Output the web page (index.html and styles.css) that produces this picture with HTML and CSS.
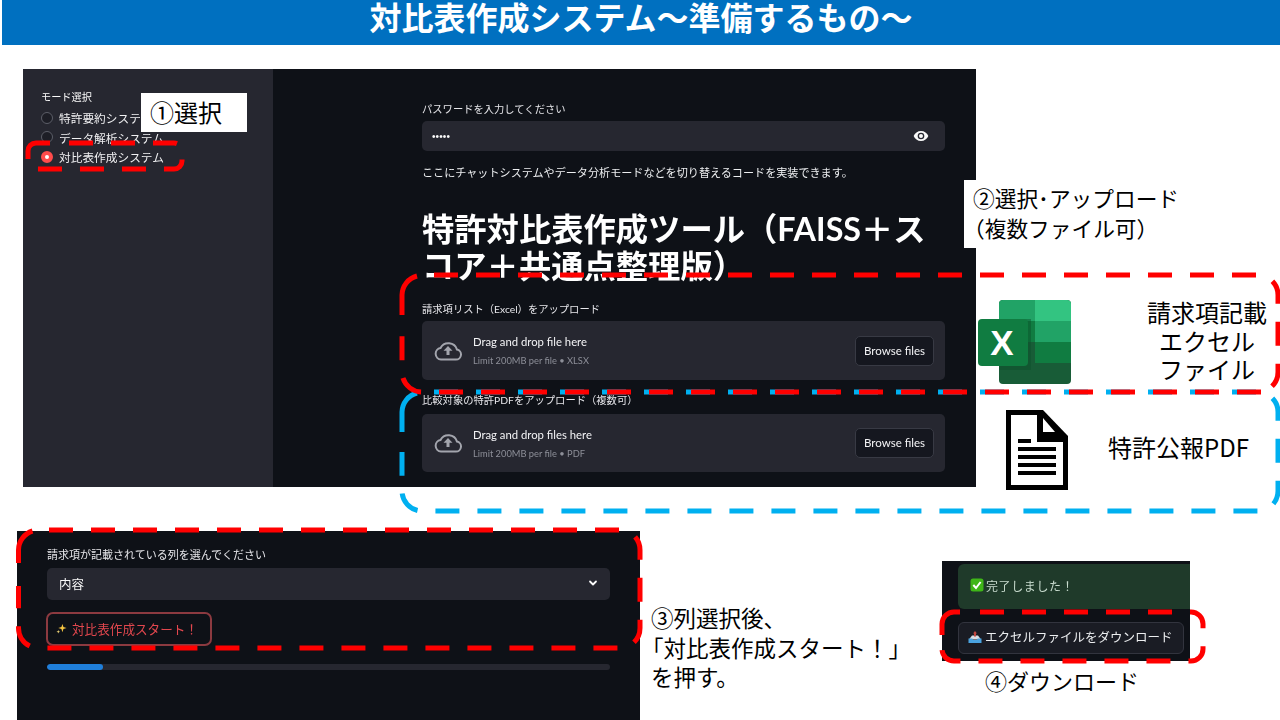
FILE: index.html
```html
<!DOCTYPE html>
<html lang="ja">
<head>
<meta charset="utf-8">
<title>対比表作成システム～準備するもの～</title>
<link rel="stylesheet" href="styles.css">
</head>
<body>
<div class="slide">
  <header class="title-bar">対比表作成システム～準備するもの～</header>

  <section class="window window-main">
    <aside class="sidebar">
      <div class="side-label">モード選択</div>
      <div class="radio-list">
        <div class="radio-row"><span class="radio"></span>特許要約システム</div>
        <div class="radio-row"><span class="radio"></span>データ解析システム</div>
        <div class="radio-row"><span class="radio radio-on"></span>対比表作成システム</div>
      </div>
    </aside>
    <main class="content">
      <div class="label">パスワードを入力してください</div>
      <div class="input">
        <span class="dots">•••••</span>
        <svg class="eye" viewBox="0 0 24 24" width="16" height="16"><path fill="#fafafa" d="M12 4.500C7 4.500 2.700 7.600 1 12c1.700 4.400 6 7.500 11 7.500s9.300-3.100 11-7.500c-1.700-4.400-6-7.500-11-7.500zM12 17a5 5 0 1 1 0-10 5 5 0 0 1 0 10zm0-8a3 3 0 1 0 0 6 3 3 0 0 0 0-6z"/></svg>
      </div>
      <p class="note">ここにチャットシステムやデータ分析モードなどを切り替えるコードを実装できます。</p>
      <h1 class="heading">特許対比表作成ツール（FAISS＋スコア＋共通点整理版）</h1>
      <div class="label label-first">請求項リスト（Excel）をアップロード</div>
      <div class="dropzone">
        <svg class="cloud" viewBox="0 0 28 20" width="28" height="20"><path fill="none" stroke="#a3a5ad" stroke-width="2" d="M7 18.500h15a5 5 0 0 0 1-9.900A9 9 0 0 0 6.500 7 5.800 5.800 0 0 0 7 18.500z"/><path fill="#a3a5ad" d="M14 5l4.500 4.800h-3v4.200h-3V9.800h-3z"/></svg>
        <div class="drop-text">
          <div class="drop-title">Drag and drop file here</div>
          <div class="drop-limit">Limit 200MB per file • XLSX</div>
        </div>
        <div class="browse">Browse files</div>
      </div>
      <div class="label label-second">比較対象の特許PDFをアップロード（複数可）</div>
      <div class="dropzone dropzone-second">
        <svg class="cloud" viewBox="0 0 28 20" width="28" height="20"><path fill="none" stroke="#a3a5ad" stroke-width="2" d="M7 18.500h15a5 5 0 0 0 1-9.900A9 9 0 0 0 6.500 7 5.800 5.800 0 0 0 7 18.500z"/><path fill="#a3a5ad" d="M14 5l4.500 4.800h-3v4.200h-3V9.800h-3z"/></svg>
        <div class="drop-text">
          <div class="drop-title">Drag and drop files here</div>
          <div class="drop-limit">Limit 200MB per file • PDF</div>
        </div>
        <div class="browse">Browse files</div>
      </div>
    </main>
  </section>

  <section class="window window-select">
    <div class="label label-select">請求項が記載されている列を選んでください</div>
    <div class="select">
      <span>内容</span>
      <svg viewBox="0 0 12 12" width="12" height="12"><path fill="none" stroke="#fafafa" stroke-width="1.800" stroke-linecap="round" stroke-linejoin="round" d="M3 4.500l3 3 3-3"/></svg>
    </div>
    <div class="start-btn">
      <svg viewBox="0 0 12 12" width="11" height="11"><path fill="#f5c542" d="M7 1l1.100 3.400L11.500 5.500 8.100 6.600 7 10 5.900 6.600 2.500 5.500l3.400-1.100z"/><path fill="#f5d97a" d="M2.500 7.500l.5 1.500 1.500.5-1.500.5-.5 1.500-.5-1.500L.5 9.500 2 9z"/></svg>
      対比表作成スタート！
    </div>
    <div class="progress"><div class="progress-fill"></div></div>
  </section>

  <section class="window window-done">
    <div class="success">
      <svg viewBox="0 0 14 14" width="14" height="14"><rect x=".5" y=".5" width="13" height="13" rx="2.500" fill="#3fb618"/><path fill="none" stroke="#fff" stroke-width="2" d="M3.300 7l2.700 3 4.600-6"/></svg>
      完了しました！
    </div>
    <div class="download">
      <svg viewBox="0 0 14 14" width="14" height="14"><path fill="#d9dde3" d="M4 5.500h6l3 4H1z"/><path fill="#c2473f" d="M7 1l2 2.500H8V6.500H6V3.500H5z"/><path fill="#4aa3e0" d="M.5 8.500h3.800l.9 1.500h3.600l.9-1.500h3.800V13H.5z"/></svg>
      エクセルファイルをダウンロード
    </div>
  </section>

  <div class="callout callout-one">①選択</div>
  <div class="callout callout-two">②選択･アップロード<br><span class="hang">（</span>複数ファイル可）</div>
  <div class="caption caption-three">③列選択後、<br><span class="hang">「</span>対比表作成スタート！」<br>を押す。</div>
  <div class="caption caption-four">④ダウンロード</div>
  <div class="caption caption-excel">請求項記載<br>エクセル<br>ファイル</div>
  <div class="caption caption-pdf">特許公報PDF</div>

  <svg class="icon-excel" viewBox="0 0 94 85" width="94" height="85">
    <rect x="21" y="1" width="72" height="84" rx="4" fill="#185c37"/>
    <path fill="#21a366" d="M25 1h32v21H21V5a4 4 0 0 1 4-4z"/>
    <path fill="#33c481" d="M57 1h32a4 4 0 0 1 4 4v17H57z"/>
    <rect x="21" y="22" width="36" height="21" fill="#107c41"/>
    <rect x="57" y="22" width="36" height="21" fill="#21a366"/>
    <rect x="57" y="43" width="36" height="21" fill="#107c41"/>
    <rect x="21" y="20" width="32" height="51" fill="#0b4f2a" opacity=".45"/>
    <rect x="0" y="20" width="50" height="47" rx="4" fill="#107c41"/>
    <text class="excel-x" x="24" y="56" text-anchor="middle">X</text>
  </svg>

  <svg class="icon-doc" viewBox="0 0 62 80" width="62" height="80">
    <path fill="#000" d="M0 0h37l25 26v54H0z"/>
    <path fill="#fff" d="M5 5h26v27h26v43H5z"/>
    <path fill="#fff" d="M37 8l12 14H37z"/>
    <path fill="#000" d="M12 29h13v4H12zM12 37h38v4H12zM12 45h38v4H12zM12 53h38v4H12zM12 61h38v4H12z"/>
  </svg>

  <svg class="overlay" viewBox="0 0 1280 720" width="1280" height="720">
    <g fill="none" stroke-width="5">
      <g stroke="#00b0f0">
        <path stroke-dasharray="24 18" d="M434 392H1258a20 20 0 0 1 20 20v79a20 20 0 0 1-20 20H422a20 20 0 0 1-20-20V452"/>
        <path d="M402 432V412a20 20 0 0 1 15-19"/>
      </g>
      <g stroke="#ff0000">
        <path stroke-dasharray="24 18" d="M434 275H1258a20 20 0 0 1 20 20v77a20 20 0 0 1-20 20"/>
        <path stroke-dasharray="24 18" d="M1261 392H422a20 20 0 0 1-20-20V336"/>
        <path d="M402 315V295a20 20 0 0 1 15-19"/>
        <path stroke-dasharray="24 18" d="M49 530H620a20 20 0 0 1 20 20v78a20 20 0 0 1-20 20H38.500a20 20 0 0 1-20-20V586"/>
        <path d="M18.500 563V550a20 20 0 0 1 14-19"/>
        <path stroke-dasharray="24 18" d="M980 612H1191a12 12 0 0 1 12 12v25a12 12 0 0 1-12 12H954a12 12 0 0 1-12-12"/>
        <path d="M942 635V624a12 12 0 0 1 12-12H960"/>
        <path stroke-dasharray="24 18" d="M69 143H174a8 8 0 0 1 8 8V161a8 8 0 0 1-8 8H36a8 8 0 0 1-8-8"/>
        <path d="M28 159V151a8 8 0 0 1 8-8H50"/>
      </g>
    </g>
  </svg>
</div>
</body>
</html>
```
FILE: styles.css
```css
* { box-sizing: border-box; }
html, body { margin: 0; padding: 0; background: #fff; }
body { font-family: "Noto Sans CJK JP", "Noto Sans", sans-serif; }
.slide { position: relative; width: 1280px; height: 720px; overflow: hidden; background: #fff; }
.title-bar {
  margin-left: 2px; height: 45px; background: #0070c0; color: #fff;
  font-size: 32px; font-weight: 700; line-height: 32px; text-align: center;
}
.window { position: absolute; background: #0e1117; color: #fafafa; filter: blur(.3px); font-family: Lato, "Noto Sans CJK JP", sans-serif; }
.window-main { left: 23px; top: 69px; width: 953px; height: 418px; display: flex; }
.window-select { left: 17px; top: 531px; width: 623px; height: 189px; padding: 16px 30px 0; }
.window-done { left: 942px; top: 561px; width: 248px; height: 100px; padding: 3px 0 0 16px; }

.sidebar { width: 250px; background: #262730; padding: 21px 0 0 18px; }
.side-label { font-size: 10.200px; line-height: 14px; }
.radio-list { margin-top: 4px; }
.radio-row { display: flex; align-items: center; gap: 6px; height: 19.500px; font-size: 11.700px; color: #f0f0f2; white-space: nowrap; }
.radio { width: 12px; height: 12px; border-radius: 50%; border: 1.500px solid #5c5e68; background: #1d1e26; flex: none; }
.radio-on { border: 4px solid #ff4b4b; background: #fff; }

.content { flex: 1; padding: 32px 31px 0 149px; }
.label { font-size: 10.300px; line-height: 16px; color: #e6e6ea; white-space: nowrap; }
.label-first { margin-top: 17px; }
.label-second { margin-top: 12px; }
.input { margin-top: 4px; height: 30px; background: #262730; border-radius: 5px; display: flex; align-items: center; justify-content: space-between; padding: 0 16px 0 10px; }
.dots { font-size: 10px; letter-spacing: .1px; font-family: "Liberation Sans", sans-serif; }
.note { margin: 14px 0 0; font-size: 11.100px; line-height: 16px; color: #eceef0; white-space: nowrap; }
.heading { margin: 29px 0 0; font-size: 32.300px; line-height: 37px; font-weight: 700; color: #fff; }
.dropzone { margin-top: 4px; height: 59px; background: #262730; border-radius: 5px; display: flex; align-items: center; padding: 0 11px 0 12px; }
.dropzone-second { margin-top: 6px; height: 58px; }
.cloud { flex: none; }
.drop-text { margin-left: 11px; flex: 1; padding-top: 1px; }
.drop-title { font-size: 11.300px; font-weight: 400; line-height: 16px; color: #f4f4f6; }
.drop-limit { margin-top: 4px; font-size: 9.300px; line-height: 14px; color: #8d8f98; }
.browse { width: 79px; height: 30px; border: 1px solid #383a44; border-radius: 5px; background: #15171f; font-size: 11.500px; line-height: 27px; text-align: center; color: #f4f4f6; }

.label-select { font-size: 11px; }
.select { margin-top: 5px; height: 32px; background: #262730; border-radius: 5px; display: flex; align-items: center; justify-content: space-between; padding: 0 11px 2px 12px; font-size: 12.500px; }
.start-btn { margin: 12px 0 0 -1px; width: 166px; height: 34px; border: 2.500px solid #8c3a40; border-radius: 7px; display: flex; align-items: center; gap: 5px; padding: 0 0 2px 8px; font-size: 12.600px; color: #e2474e; white-space: nowrap; }
.progress { margin-top: 18px; height: 6px; border-radius: 3px; background: #262730; overflow: hidden; }
.progress-fill { width: 10%; height: 100%; border-radius: 3px; background: #1f7fdb; }

.success { height: 45px; background: #1f3a2a; border-radius: 6px 0 0 6px; display: flex; align-items: center; gap: 2px; padding: 0 0 3px 12px; font-size: 12px; color: #c9dccf; letter-spacing: .6px; white-space: nowrap; }
.download { margin-top: 13px; width: 226px; height: 32px; background: #1a1c24; border: 1px solid #32343e; border-radius: 6px; display: flex; align-items: center; gap: 3px; padding: 0 0 3px 9px; font-size: 12.500px; color: #eceef0; white-space: nowrap; }

.callout { position: absolute; background: #fff; color: #000; white-space: nowrap; }
.callout-one { left: 141px; top: 93px; width: 106px; height: 39px; padding-left: 9px; font-size: 24px; line-height: 37px; }
.callout-two { left: 964px; top: 180px; width: 212px; height: 68px; padding: 3px 0 0 9px; font-size: 21.700px; line-height: 30px; }
.hang { margin-left: -10px; }
.caption { position: absolute; color: #000; white-space: nowrap; }
.caption-three { left: 651px; top: 603px; font-size: 22.500px; line-height: 29.500px; }
.caption-four { left: 985px; top: 664px; font-size: 22px; line-height: 32px; }
.caption-excel { left: 1147px; top: 298px; width: 120px; font-size: 24px; line-height: 28.500px; text-align: center; }
.caption-pdf { left: 1108px; top: 431px; font-size: 24px; line-height: 32px; }
.icon-excel { position: absolute; left: 978px; top: 299px; }
.excel-x { font-family: "Liberation Sans", sans-serif; font-size: 35px; font-weight: 700; fill: #fff; }
.icon-doc { position: absolute; left: 1006px; top: 410px; }
.overlay { position: absolute; left: 0; top: 0; }
```
